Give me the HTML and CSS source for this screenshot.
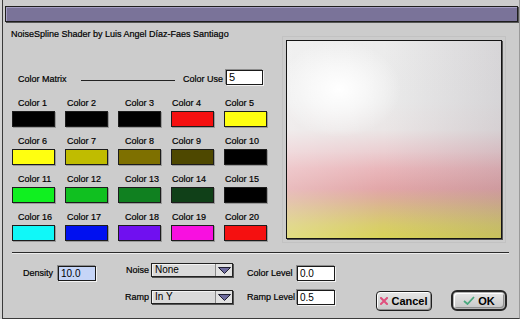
FILE: index.html
```html
<!DOCTYPE html>
<html lang="en">
  <head>
    <meta charset="UTF-8" />
    <title>NoiseSpline Shader</title>
    <link rel="stylesheet" href="styles.css">
  </head>
  <body>
    <div class="window">
      <div class="titlebar"></div>

      <!-- Upper part: colour matrix + preview -->
      <div class="main">
        <div class="left">
          <p class="credit">NoiseSpline Shader by Luis Angel Díaz-Faes Santiago</p>
          <div class="matrix-head">
            <span class="mh-label">Color Matrix</span>
            <span class="mh-rule"></span>
            <span class="mh-use">Color Use</span>
            <span class="field field-use">5</span>
          </div>
          <div class="swatches">
            <div class="cell"><span class="cell-label">Color 1</span><span class="swatch" style="background:#000000"></span></div>
            <div class="cell"><span class="cell-label">Color 2</span><span class="swatch" style="background:#000000"></span></div>
            <div class="cell"><span class="cell-label">Color 3</span><span class="swatch" style="background:#000000"></span></div>
            <div class="cell"><span class="cell-label">Color 4</span><span class="swatch" style="background:#f51010"></span></div>
            <div class="cell"><span class="cell-label">Color 5</span><span class="swatch" style="background:#ffff10"></span></div>
            <div class="cell"><span class="cell-label">Color 6</span><span class="swatch" style="background:#ffff10"></span></div>
            <div class="cell"><span class="cell-label">Color 7</span><span class="swatch" style="background:#c0bc00"></span></div>
            <div class="cell"><span class="cell-label">Color 8</span><span class="swatch" style="background:#7e7000"></span></div>
            <div class="cell"><span class="cell-label">Color 9</span><span class="swatch" style="background:#4e4800"></span></div>
            <div class="cell"><span class="cell-label">Color 10</span><span class="swatch" style="background:#000000"></span></div>
            <div class="cell"><span class="cell-label">Color 11</span><span class="swatch" style="background:#10f020"></span></div>
            <div class="cell"><span class="cell-label">Color 12</span><span class="swatch" style="background:#10c020"></span></div>
            <div class="cell"><span class="cell-label">Color 13</span><span class="swatch" style="background:#108020"></span></div>
            <div class="cell"><span class="cell-label">Color 14</span><span class="swatch" style="background:#104018"></span></div>
            <div class="cell"><span class="cell-label">Color 15</span><span class="swatch" style="background:#000000"></span></div>
            <div class="cell"><span class="cell-label">Color 16</span><span class="swatch" style="background:#10f8f8"></span></div>
            <div class="cell"><span class="cell-label">Color 17</span><span class="swatch" style="background:#0010f0"></span></div>
            <div class="cell"><span class="cell-label">Color 18</span><span class="swatch" style="background:#7010f0"></span></div>
            <div class="cell"><span class="cell-label">Color 19</span><span class="swatch" style="background:#f810e0"></span></div>
            <div class="cell"><span class="cell-label">Color 20</span><span class="swatch" style="background:#f51010"></span></div>
          </div>
        </div>
        <div class="preview"></div>
      </div>

      <div class="sep"></div>

      <!-- Lower part: parameters + buttons -->
      <div class="controls">
        <div class="grp grp-density">
          <span class="lbl lbl-density">Density</span>
          <span class="field field-sel">10.0</span>
        </div>

        <div class="grp grp-popups">
          <div class="prow">
            <span class="lbl lbl-popup">Noise</span>
            <div class="popup">
              <span class="popup-text">None</span>
              <span class="popup-arrow">
                <svg width="13" height="7" viewBox="0 0 13 7"><path d="M0.5 0.5 H12.5 L6.5 6.5 Z" fill="#6f6c9e" stroke="#1e1e30" stroke-width="1"/></svg>
              </span>
            </div>
          </div>
          <div class="prow">
            <span class="lbl lbl-popup">Ramp</span>
            <div class="popup">
              <span class="popup-text">In Y</span>
              <span class="popup-arrow">
                <svg width="13" height="7" viewBox="0 0 13 7"><path d="M0.5 0.5 H12.5 L6.5 6.5 Z" fill="#6f6c9e" stroke="#1e1e30" stroke-width="1"/></svg>
              </span>
            </div>
          </div>
        </div>

        <div class="grp grp-levels">
          <div class="lrow">
            <span class="lbl lbl-level">Color Level</span>
            <span class="field">0.0</span>
          </div>
          <div class="lrow">
            <span class="lbl lbl-level">Ramp Level</span>
            <span class="field">0.5</span>
          </div>
        </div>

        <div class="grp grp-buttons">
          <div class="btn btn-cancel">
            <svg width="8" height="8" viewBox="0 0 8 8"><path d="M1 1 L7 7 M7 1 L1 7" stroke="#e0507e" stroke-width="2" stroke-linecap="square"/></svg>
            <span>Cancel</span>
          </div>
          <div class="btn-ring">
            <div class="btn btn-ok">
              <svg width="12" height="9" viewBox="0 0 12 9"><path d="M1 5 L4.5 8 L11 1" fill="none" stroke="#4aa87e" stroke-width="1.8"/></svg>
              <span>OK</span>
            </div>
          </div>
        </div>
      </div>
    </div>
  </body>
</html>
```

FILE: styles.css
```css
/* Reset */
* {
  margin: 0;
  padding: 0;
  box-sizing: border-box;
}

body {
  background: #d4d4d4;
  font-family: "Liberation Sans", Arial, sans-serif;
  font-size: 9px;
  color: #000;
  -webkit-text-stroke: 0.2px #000;
}

/* Window frame */
.window {
  width: 518px;
  height: 319px;
  margin-left: 2px;
  background: #cccccc;
  border-left: 1px solid #3a3a3a;
  border-right: 1px solid #9a9a9a;
  border-bottom: 1px solid #3a3a3a;
  overflow: hidden;
}

.titlebar {
  height: 16px;
  margin: 6px 1px 0 2px;
  background: #7a7399;
  border: 1px solid #1e1e1e;
  box-shadow: inset 1px 1px 0 #a49dc2, 1px 1px 0 #555;
}

/* Upper part */
.main {
  display: flex;
  padding-left: 8px;
}

.left {
  width: 255px;
  flex: none;
}

.credit {
  margin-top: 7px;
  line-height: 11px;
  white-space: nowrap;
}

.matrix-head {
  display: flex;
  align-items: flex-end;
  margin-top: 30px;
  height: 15px;
  line-height: 11px;
}

.mh-label {
  width: 63px;
  margin-left: 7px;
  flex: none;
}

.mh-rule {
  width: 94px;
  height: 1px;
  flex: none;
  background: #222;
  margin-bottom: 4px;
}

.mh-use {
  width: 43px;
  margin-left: 8px;
  flex: none;
}

/* Edit text fields */
.field {
  display: block;
  flex: none;
  width: 38px;
  height: 15px;
  padding-left: 2px;
  background: #fff;
  border: 1px solid #1a1a1a;
  box-shadow: -1px -1px 0 #8c8c8c, 1px 1px 0 #f2f2f2;
  font-size: 10px;
  line-height: 13px;
  -webkit-text-stroke: 0;
}

.field-use {
  width: 37px;
  font-size: 11px;
}

.field-sel {
  background: #c6d5f7;
}

/* Colour matrix */
.swatches {
  display: grid;
  grid-template-columns: repeat(5, 43px);
  column-gap: 10px;
  row-gap: 8px;
  margin-top: 12px;
  margin-left: 1px;
}

.cell {
  display: flex;
  flex-direction: column;
}

.cell-label {
  line-height: 12px;
  white-space: nowrap;
}

.cell:nth-child(5n+1) .cell-label { padding-left: 6px; }
.cell:nth-child(5n+2) .cell-label { padding-left: 2px; }
.cell:nth-child(5n+3) .cell-label { padding-left: 7px; }
.cell:nth-child(5n+4) .cell-label { padding-left: 1px; }
.cell:nth-child(5n+5) .cell-label { padding-left: 1px; }

.swatch {
  display: block;
  height: 16px;
  margin-top: 2px;
  border: 1px solid #1c1c1c;
  box-shadow: 1px 1px 0 #9a9a9a;
}

/* Shader preview */
.preview {
  flex: none;
  width: 216px;
  height: 199px;
  margin: 18px 0 0 20px;
  border: 1px solid #141414;
  box-shadow: 1px 1px 0 #555;
  outline: 1px solid #c2c2c2;
  outline-offset: 3px;
  background:
    radial-gradient(ellipse 62px 48px at 52px 48px, rgba(255, 255, 255, 1), rgba(255, 255, 255, 0.6) 45%, rgba(255, 255, 255, 0) 100%),
    linear-gradient(to right, rgba(255, 255, 255, 0.25), rgba(255, 255, 255, 0) 45%, rgba(105, 95, 110, 0.16) 100%),
    linear-gradient(to bottom, #ececec 0%, #ebebeb 30%, #ebe6e6 45%, #ebcfd2 56%, #e9b6ba 65%, #e2a6a8 75%, #ddae98 80%, #d9bc84 86%, #d8cb6c 93%, #d8d358 100%);
}

.sep {
  height: 2px;
  margin: 11px 10px 0 9px;
  border-top: 1px solid #2a2a2a;
  border-bottom: 1px solid #ececec;
}

/* Lower part */
.controls {
  display: flex;
  align-items: flex-start;
  padding-left: 20px;
}

.grp {
  display: flex;
  flex: none;
}

.lbl {
  flex: none;
  line-height: 11px;
  white-space: nowrap;
}

.grp-density {
  margin-top: 12px;
  align-items: center;
}

.lbl-density {
  width: 35px;
}

.grp-popups {
  flex-direction: column;
  gap: 13px;
  margin-top: 9px;
}

.prow {
  display: flex;
  align-items: center;
}

.lbl-popup {
  width: 53px;
  margin-right: 2px;
  text-align: right;
}

.popup {
  display: flex;
  width: 82px;
  height: 14px;
  background: #dadada;
  border: 1px solid #222;
  box-shadow: 1px 1px 0 #555, inset 1px 1px 0 #f4f4f4;
}

.popup-text {
  flex: 1;
  padding-left: 3px;
  font-size: 10px;
  line-height: 12px;
  -webkit-text-stroke: 0;
}

.popup-arrow {
  display: flex;
  width: 17px;
  align-items: center;
  justify-content: center;
  border-left: 1px solid #888;
  background: #e2e2e2;
}

.grp-levels {
  flex-direction: column;
  gap: 9px;
  margin: 12px 0 0 14px;
}

.lrow {
  display: flex;
  align-items: center;
}

.lbl-level {
  width: 50px;
}

/* Buttons */
.grp-buttons {
  margin: 36px 0 0 41px;
  gap: 19px;
  align-items: flex-end;
}

.btn {
  display: flex;
  align-items: center;
  justify-content: center;
  gap: 3px;
  height: 20px;
  width: 56px;
  border: 1px solid #1e1e1e;
  border-radius: 4px;
  background: linear-gradient(#e6e6e6, #c8c8c8);
  box-shadow: inset 1px 1px 0 #fff, inset -1px -1px 0 #8e8e8e;
  font-size: 11px;
  font-weight: bold;
  -webkit-text-stroke: 0;
}

.btn-ring {
  width: 56px;
  height: 21px;
  border: 2px solid #262626;
  border-radius: 6px;
  padding: 1px;
  background: #b4b4b4;
}

.btn-ok {
  width: 100%;
  height: 100%;
  border-radius: 3px;
  border-width: 0;
}
```
